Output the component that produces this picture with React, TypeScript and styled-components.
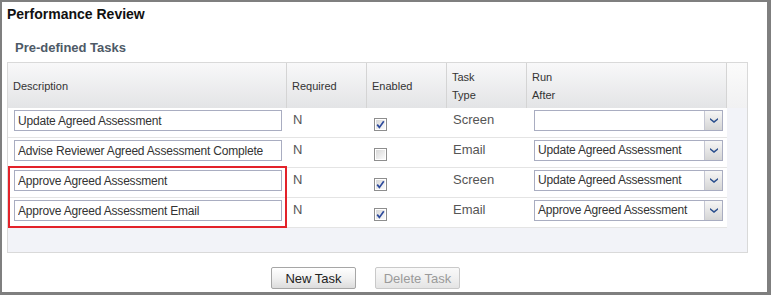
import React from "react";
import styled, { createGlobalStyle } from "styled-components";

const GlobalStyle = createGlobalStyle`
  body {
    margin: 0;
    font-family: "Liberation Sans", Arial, sans-serif;
  }
`;

const COLS = "279px 80px 80px 80px 200px 20px";

const Frame = styled.div`
  display: flex;
  flex-direction: column;
  width: 771px;
  height: 295px;
  box-sizing: border-box;
  border-style: solid;
  border-color: #7f7f7f;
  border-width: 2px 4px 3px 2px;
  background: #fff;
`;

const Title = styled.h1`
  margin: 0;
  padding: 4px 0 0 5px;
  font-size: 14px;
  font-weight: 700;
  line-height: 16px;
  color: #111;
`;

const SubTitle = styled.h2`
  margin: 18px 0 0 13px;
  font-size: 13px;
  font-weight: 700;
  line-height: 16px;
  color: #4e5a67;
`;

const Panel = styled.div`
  margin: 6px 0 0 5px;
  width: 741px;
  box-sizing: border-box;
  border: 1px solid #d9d9d9;
  background: #f2f3f8;
  padding-bottom: 24px;
`;

const HeaderRow = styled.div`
  display: grid;
  grid-template-columns: ${COLS};
  height: 45px;
  background: linear-gradient(#f8f8f9, #e3e4e6);
`;

const HeadCell = styled.div<{ $filler?: boolean }>`
  display: flex;
  align-items: center;
  box-sizing: border-box;
  padding-left: 5px;
  border-right: ${(p) => (p.$filler ? "none" : "1px solid #d4d4d4")};
  background: ${(p) => (p.$filler ? "linear-gradient(#fbfbfb, #f1f1f2)" : "transparent")};
  font-size: 11px;
  line-height: 18px;
  color: #333;
`;

const Body = styled.div`
  position: relative;
`;

const Row = styled.div`
  display: grid;
  grid-template-columns: ${COLS};
  height: 30px;
`;

const Cell = styled.div<{ $indent?: number }>`
  box-sizing: border-box;
  padding: 2px 0 0 ${(p) => p.$indent ?? 6}px;
  background: #fff;
  border-bottom: 1px solid #e4e4e4;
`;

const Filler = styled.div``;

const TextBox = styled.input`
  display: block;
  width: 268px;
  height: 21px;
  box-sizing: border-box;
  margin: 0;
  padding: 0 3px;
  border: 1px solid #a9adc1;
  border-radius: 0;
  outline: none;
  font-family: "Liberation Sans", Arial, sans-serif;
  font-size: 12px;
  letter-spacing: -0.2px;
  color: #333;
  background: #fff;
`;

const Value = styled.span`
  display: block;
  font-size: 13px;
  line-height: 19px;
  color: #555;
`;

const CheckBox = styled.svg`
  display: block;
  margin-top: 8px;
`;

const Select = styled.div`
  display: flex;
  width: 189px;
  height: 21px;
  box-sizing: border-box;
  border: 1px solid #a9adc1;
  background: #fff;
`;

const SelectText = styled.span`
  flex: 1;
  padding-left: 3px;
  font-size: 12px;
  line-height: 19px;
  letter-spacing: -0.2px;
  color: #333;
  white-space: nowrap;
`;

const SelectButton = styled.span`
  display: flex;
  align-items: center;
  justify-content: center;
  width: 17px;
  border-left: 1px solid #c6c8d4;
  background: linear-gradient(#f6f6f6, #d5d5d5);
`;

const Highlight = styled.div`
  position: absolute;
  left: 0;
  top: 58px;
  width: 279px;
  height: 62px;
  box-sizing: border-box;
  border: 2px solid #e3222a;
  pointer-events: none;
`;

const ButtonBar = styled.div`
  display: flex;
  gap: 19px;
  margin-top: 14px;
  padding-left: 269px;
`;

const Button = styled.button`
  width: 85px;
  height: 22px;
  padding: 0;
  border: 1px solid #a6a6a6;
  border-radius: 2px;
  background: linear-gradient(#ffffff 0%, #f1f1f1 50%, #dcdcdc 100%);
  font-family: "Liberation Sans", Arial, sans-serif;
  font-size: 13px;
  color: #222;

  &:disabled {
    border-color: #c9c9c9;
    background: linear-gradient(#f9f9f9 0%, #f0f0f0 50%, #e4e4e4 100%);
    color: #9a9a9a;
  }
`;

const Check = ({ checked }: { checked: boolean }) => (
  <CheckBox width="13" height="13" viewBox="0 0 13 13">
    <defs>
      <linearGradient id="cbg" x1="0" y1="0" x2="1" y2="1">
        <stop offset="0" stopColor="#d8d8d8" />
        <stop offset="1" stopColor="#fbfbfb" />
      </linearGradient>
    </defs>
    <rect x="0.5" y="0.5" width="12" height="12" fill="#fff" stroke="#8e8e8e" />
    <rect x="2" y="2" width="9" height="9" fill="url(#cbg)" />
    {checked && (
      <path d="M3.2 6.6 L5.4 9.4 L9.8 3.2" fill="none" stroke="#2d4a9c" strokeWidth="1.7" />
    )}
  </CheckBox>
);

const Chevron = () => (
  <svg width="8" height="5" viewBox="0 0 8 5">
    <path d="M0 0 L4 3 L8 0 L8 1.8 L4 5 L0 1.8 Z" fill="#2b4f8e" />
  </svg>
);

type Task = {
  description: string;
  required: string;
  enabled: boolean;
  type: string;
  runAfter: string;
};

const tasks: Task[] = [
  { description: "Update Agreed Assessment", required: "N", enabled: true, type: "Screen", runAfter: "" },
  {
    description: "Advise Reviewer Agreed Assessment Complete",
    required: "N",
    enabled: false,
    type: "Email",
    runAfter: "Update Agreed Assessment",
  },
  {
    description: "Approve Agreed Assessment",
    required: "N",
    enabled: true,
    type: "Screen",
    runAfter: "Update Agreed Assessment",
  },
  {
    description: "Approve Agreed Assessment Email",
    required: "N",
    enabled: true,
    type: "Email",
    runAfter: "Approve Agreed Assessment",
  },
];

const App = () => {
  return (
    <>
      <GlobalStyle />
      <Frame>
        <Title>Performance Review</Title>
        <SubTitle>Pre-defined Tasks</SubTitle>
        <Panel>
          <HeaderRow>
            <HeadCell>Description</HeadCell>
            <HeadCell>Required</HeadCell>
            <HeadCell>Enabled</HeadCell>
            <HeadCell>
              Task
              <br />
              Type
            </HeadCell>
            <HeadCell>
              Run
              <br />
              After
            </HeadCell>
            <HeadCell $filler />
          </HeaderRow>
          <Body>
            {tasks.map((t) => (
              <Row key={t.description}>
                <Cell>
                  <TextBox readOnly value={t.description} />
                </Cell>
                <Cell>
                  <Value>{t.required}</Value>
                </Cell>
                <Cell $indent={7}>
                  <Check checked={t.enabled} />
                </Cell>
                <Cell>
                  <Value>{t.type}</Value>
                </Cell>
                <Cell $indent={7}>
                  <Select>
                    <SelectText>{t.runAfter}</SelectText>
                    <SelectButton>
                      <Chevron />
                    </SelectButton>
                  </Select>
                </Cell>
                <Filler />
              </Row>
            ))}
            <Highlight />
          </Body>
        </Panel>
        <ButtonBar>
          <Button>New Task</Button>
          <Button disabled>Delete Task</Button>
        </ButtonBar>
      </Frame>
    </>
  );
};

export default App;
